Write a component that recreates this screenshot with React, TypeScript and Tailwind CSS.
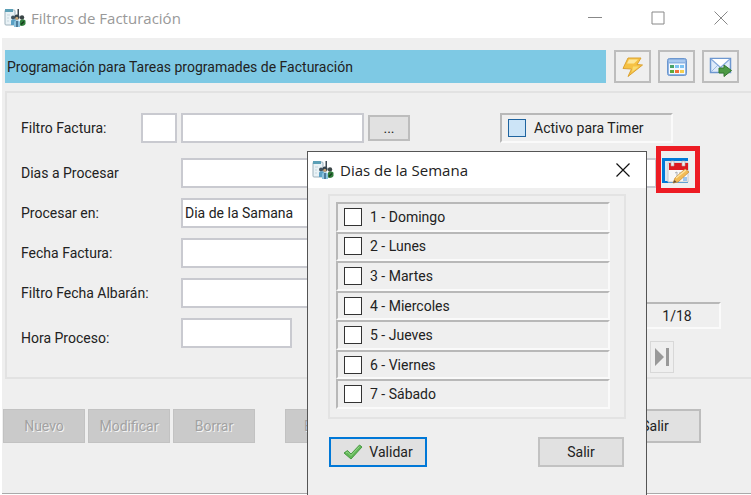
import { useState } from 'react';
import type { ReactNode } from 'react';

const days = ['Domingo', 'Lunes', 'Martes', 'Miercoles', 'Jueves', 'Viernes', 'Sábado'];

const fieldClass = 'h-[30px] border-2 border-[#c9cad0] bg-white px-0.5 text-sm outline-none';
const sunkenClass = 'border-2 border-t-[#b8b8b8] border-l-[#b8b8b8] border-r-[#fafafa] border-b-[#fafafa]';
const disabledClass =
  'h-[34px] w-[82px] border border-[#c2c2c2] bg-[#cacaca] text-[#a2a2a2] [text-shadow:1px_1px_0_#f4f4f4]';

function AppIcon() {
  return (
    <svg viewBox="0 0 22 20" className="h-5 w-[22px] shrink-0" aria-hidden="true">
      <rect x="1" y="2" width="10" height="15" rx="1" fill="#e9f2f6" stroke="#9db1bc" />
      <path d="M1 1h8v3H1z" fill="#5b9fb6" />
      <path d="M3 7h3M3 10h2M3 13h2" stroke="#c5d5dd" />
      <path d="M13.500 1h1.500v6h-1.500z" fill="#3c4852" />
      <circle cx="9" cy="9.5" r="2" fill="#41525e" />
      <path d="M7 17v-4c0-2.500 5-2.500 5 0v4z" fill="#5aa0c4" />
      <circle cx="13" cy="9" r="2.6" fill="#35434d" />
      <circle cx="12.8" cy="10.3" r="1.5" fill="#c9a577" />
      <path d="M10 19v-4.500c0-3 6-3 6 0V19z" fill="#8cc3df" />
      <path d="M13 13v6" stroke="#244a6b" strokeWidth="1.2" />
      <circle cx="18" cy="9.5" r="2.2" fill="#3a4446" />
      <path d="M16 17.500V13c0-2 5.500-2 5.500 0v3c-1 2-4 2.500-5.500 1.500z" fill="#2f7d3b" />
      <path d="M17 16.500l3-3" stroke="#17391d" strokeWidth="1.3" />
    </svg>
  );
}

function BoltIcon() {
  return (
    <svg viewBox="0 0 22 20" className="h-5 w-[22px]" aria-hidden="true">
      <path d="M6 1L19 1L15 7.500L20.500 8L6 19.500L9.500 12L1 11.500z" fill="#f6c244" stroke="#dba233" strokeLinejoin="round" />
      <path d="M7 2.500H16L12 6.500H5z" fill="#fde79b" />
      <path d="M11 9.500L17 9.500L10 15z" fill="#fadc70" />
    </svg>
  );
}

function CalendarIcon() {
  return (
    <svg viewBox="0 0 20 18" className="h-[18px] w-5" aria-hidden="true">
      <rect x=".5" y=".5" width="19" height="17" rx="2" fill="#8fb4e2" stroke="#6c97cf" />
      <path d="M2 2h16v2H2z" fill="#a9c9ef" />
      <path d="M2 5.500h16V16H2z" fill="#f4f8fd" />
      <path d="M3 7h4v3H3z" fill="#4aa36a" />
      <path d="M8 7h4v3H8zM13 7h4v3h-4z" fill="#7dc2f2" />
      <path d="M3 12h4v3H3z" fill="#5cab3d" />
      <path d="M8 12h4v3H8z" fill="#f0713c" />
      <path d="M13 12h4v3h-4z" fill="#f6cf4e" />
    </svg>
  );
}

function MailIcon() {
  return (
    <svg viewBox="0 0 24 20" className="h-5 w-6" aria-hidden="true">
      <rect x="1.500" y="1.500" width="20" height="14" fill="#dfebfa" stroke="#6d97d0" strokeWidth="1.500" />
      <path d="M2 15l7-7M21 15l-7-7" stroke="#9dbbe2" />
      <path d="M2 2l9.500 8.500L21 2" fill="#fff" stroke="#86a9da" strokeWidth="1.200" />
      <path d="M10 11h5V8l7.500 5.500L15 19.500v-3.500h-5z" fill="#4d9a45" stroke="#35762f" strokeLinejoin="round" />
    </svg>
  );
}

function EditCalendarIcon() {
  return (
    <svg viewBox="0 0 27 26" className="h-[26px] w-[27px]" aria-hidden="true">
      <path d="M0 0h26v25H0z" fill="#0078d7" />
      <path d="M3 3h23v20H3z" fill="#dce6ef" />
      <path d="M6 5h20v19H6z" fill="#f8f8f8" stroke="#c6c8cb" />
      <path d="M7 5h19v7H7z" fill="#dd1a20" />
      <path d="M9 3h3v5H9zM20 3h3v5h-3z" fill="#f0eeee" stroke="#b7a5a5" strokeWidth=".6" />
      <path d="M13 15l2-1v6M17 15h3" stroke="#a9adb3" fill="none" />
      <path d="M21 19h4v4h-4z" fill="#9cc5ee" />
      <path d="M11 25l2-5L23 11l4 3L16 24z" fill="#f3bc55" stroke="#c98e39" strokeWidth=".8" />
      <path d="M14 20L24 12" stroke="#fde3a0" strokeWidth="1.500" />
      <path d="M11 25l1.500-3 2 2z" fill="#63503b" />
    </svg>
  );
}

function CheckIcon() {
  return (
    <svg viewBox="0 0 20 16" className="h-4 w-5" aria-hidden="true">
      <path d="M1 9l3.500-2.500L8 10 16.500 1 19 3 8 15z" fill="#62b757" stroke="#4a9a45" strokeLinejoin="round" />
      <path d="M3 9l1.500-1L8 11.500 16.500 2.500" stroke="#96d78c" fill="none" />
    </svg>
  );
}

function ToolButton({ label, children }: { label: string; children: ReactNode }) {
  return (
    <button
      aria-label={label}
      className="flex h-[33px] w-[37px] items-center justify-center border-2 border-[#bdbdbd] bg-[#efefef]"
    >
      {children}
    </button>
  );
}

type RowProps = {
  id: string;
  label: string;
  width: string;
  value?: string;
  align?: string;
};

function Row({ id, label, width, value, align = 'items-center' }: RowProps) {
  return (
    <div className={`flex ${align}`}>
      <label htmlFor={id} className="w-40 shrink-0">
        {label}
      </label>
      <input id={id} defaultValue={value} className={`${fieldClass} ${width}`} />
    </div>
  );
}

function DaysDialog() {
  const [selected, setSelected] = useState<string[]>([]);

  const toggle = (day: string) =>
    setSelected(selected.includes(day) ? selected.filter((d) => d !== day) : [...selected, day]);

  return (
    <div
      role="dialog"
      aria-labelledby="days-title"
      className="absolute top-[151px] left-[307px] h-[360px] w-[340px] border border-[#555] bg-[#efefef]"
    >
      <div className="flex h-9 items-center bg-white pr-4 pl-1">
        <AppIcon />
        <h2 id="days-title" className="ml-1.5 font-['Open_Sans',sans-serif] text-[15px]">
          Dias de la Semana
        </h2>
        <button aria-label="Cerrar" className="ml-auto">
          <svg viewBox="0 0 14 14" className="h-3.5 w-3.5" stroke="#111" strokeWidth="1.2">
            <path d="M.5.5l13 13M13.500.5l-13 13" />
          </svg>
        </button>
      </div>
      <div className="px-5 pt-1.5">
        <div className="border-2 border-[#e3e3e3] pt-1.5 pr-3.5 pb-2 pl-1.5">
          <div className="flex h-[207px] flex-col">
            {days.map((day, i) => (
              <label key={day} className={`flex flex-1 items-center gap-2 pl-1.5 ${sunkenClass}`}>
                <input
                  type="checkbox"
                  checked={selected.includes(day)}
                  onChange={() => toggle(day)}
                  className="h-[18px] w-[18px] appearance-none border border-[#333] bg-white checked:bg-[#0078d7]"
                />
                {i + 1} - {day}
              </label>
            ))}
          </div>
        </div>
        <div className="mt-[18px] flex justify-between pr-0.5 pl-px">
          <button className="flex h-[30px] w-[98px] items-center justify-center gap-1.5 border-2 border-[#0078d7] bg-[#e1e1e1]">
            <CheckIcon />
            Validar
          </button>
          <button className="h-[30px] w-[86px] border-2 border-[#c2c2c2] bg-[#e1e1e1]">Salir</button>
        </div>
      </div>
    </div>
  );
}

export default function App() {
  return (
    <div className="relative h-screen overflow-hidden bg-white font-[Roboto,sans-serif] text-sm leading-5 text-[#222]">
      <header className="flex h-[38px] items-center pr-[23px] pb-0.5 pl-1">
        <AppIcon />
        <h1 className="ml-[5px] font-['Open_Sans',sans-serif] text-[15px] text-[#999]">Filtros de Facturación</h1>
        <div className="ml-auto flex items-center gap-[49px]">
          <button aria-label="Minimizar">
            <svg viewBox="0 0 14 14" className="h-3.5 w-3.5" stroke="#888">
              <path d="M0 6.500h14" />
            </svg>
          </button>
          <button aria-label="Maximizar">
            <svg viewBox="0 0 14 14" className="h-3.5 w-3.5" stroke="#888" fill="none">
              <path d="M1 1h12v12H1z" />
            </svg>
          </button>
          <button aria-label="Cerrar ventana">
            <svg viewBox="0 0 14 14" className="h-3.5 w-3.5" stroke="#888">
              <path d="M.5.5l13 13M13.500.5l-13 13" />
            </svg>
          </button>
        </div>
      </header>

      <main className="ml-0.5 border-b border-[#aaa] bg-[#efefef] pt-3 pb-[50px]">
        <div className="flex items-center gap-2 pr-3 pl-[3px]">
          <div className="flex h-[33px] flex-1 items-center bg-[#7ec9e4] pl-0.5">
            Programación para Tareas programades de Facturación
          </div>
          <div className="flex gap-[7px]">
            <ToolButton label="Ejecutar">
              <BoltIcon />
            </ToolButton>
            <ToolButton label="Calendario">
              <CalendarIcon />
            </ToolButton>
            <ToolButton label="Enviar">
              <MailIcon />
            </ToolButton>
          </div>
        </div>

        <section className="mt-2 ml-[3px] border-2 border-r-0 border-[#e2e2e2] pt-5 pb-1 pl-3.5">
          <div className="flex items-center">
            <label htmlFor="filtro" className="w-[120px] shrink-0">
              Filtro Factura:
            </label>
            <input id="filtro" className={`${fieldClass} w-9`} />
            <input aria-label="Nombre del filtro" className={`${fieldClass} ml-1 w-[183px]`} />
            <button aria-label="Buscar filtro" className="ml-1 h-[26px] w-[42px] border-2 border-[#bdbdbd] bg-[#e1e1e1]">
              ...
            </button>
            <label className={`mr-[78px] ml-auto flex h-[30px] w-[173px] items-center gap-2 pl-1.5 ${sunkenClass}`}>
              <input
                type="checkbox"
                className="h-[18px] w-[18px] appearance-none border border-[#1f649f] bg-[#cce4f7] checked:bg-[#0078d7]"
              />
              Activo para Timer
            </label>
          </div>

          <div className="relative mt-[15px] flex items-center pr-[94px]">
            <label htmlFor="dias" className="w-40 shrink-0">
              Dias a Procesar
            </label>
            <input id="dias" className={`${fieldClass} min-w-0 flex-1`} />
            <button
              aria-label="Editar dias"
              className="absolute -top-3 right-[51px] flex h-[47px] w-11 items-end border-5 border-[#ed1c24] bg-[#efefef] pb-1 pl-px"
            >
              <EditCalendarIcon />
            </button>
          </div>

          <div className="mt-2.5 flex justify-between">
            <div className="flex flex-col gap-2.5">
              <Row id="procesar" label="Procesar en:" width="w-[183px]" value="Dia de la Samana" />
              <Row id="fecha" label="Fecha Factura:" width="w-[183px]" />
              <Row id="albaran" label="Filtro Fecha Albarán:" width="w-[183px]" />
              <Row id="hora" label="Hora Proceso:" width="w-[111px]" align="items-end" />
            </div>
            <div className="mt-[104px] mr-[30px]">
              <div className={`flex h-[27px] w-[88px] items-center justify-center ${sunkenClass}`}>1/18</div>
              <button
                aria-label="Último registro"
                className="mt-3 ml-[17px] flex h-8 w-6 items-center justify-center border border-[#d8d8d8]"
              >
                <svg viewBox="0 0 14 18" className="h-[18px] w-3.5" fill="#999">
                  <path d="M0 0l9 9-9 9zM11 0h3v18h-3z" />
                </svg>
              </button>
            </div>
          </div>
        </section>

        <div className="mt-[30px] flex pr-[50px] pl-px">
          <div className="flex gap-[3px]">
            <button disabled className={disabledClass}>
              Nuevo
            </button>
            <button disabled className={disabledClass}>
              Modificar
            </button>
            <button disabled className={disabledClass}>
              Borrar
            </button>
          </div>
          <button disabled className={`${disabledClass} ml-[30px] pl-[18px] text-left`}>
            E
          </button>
          <button className="ml-auto h-[34px] w-[92px] border-2 border-[#bdbdbd] bg-[#e1e1e1]">Salir</button>
        </div>
      </main>

      <DaysDialog />
    </div>
  );
}
